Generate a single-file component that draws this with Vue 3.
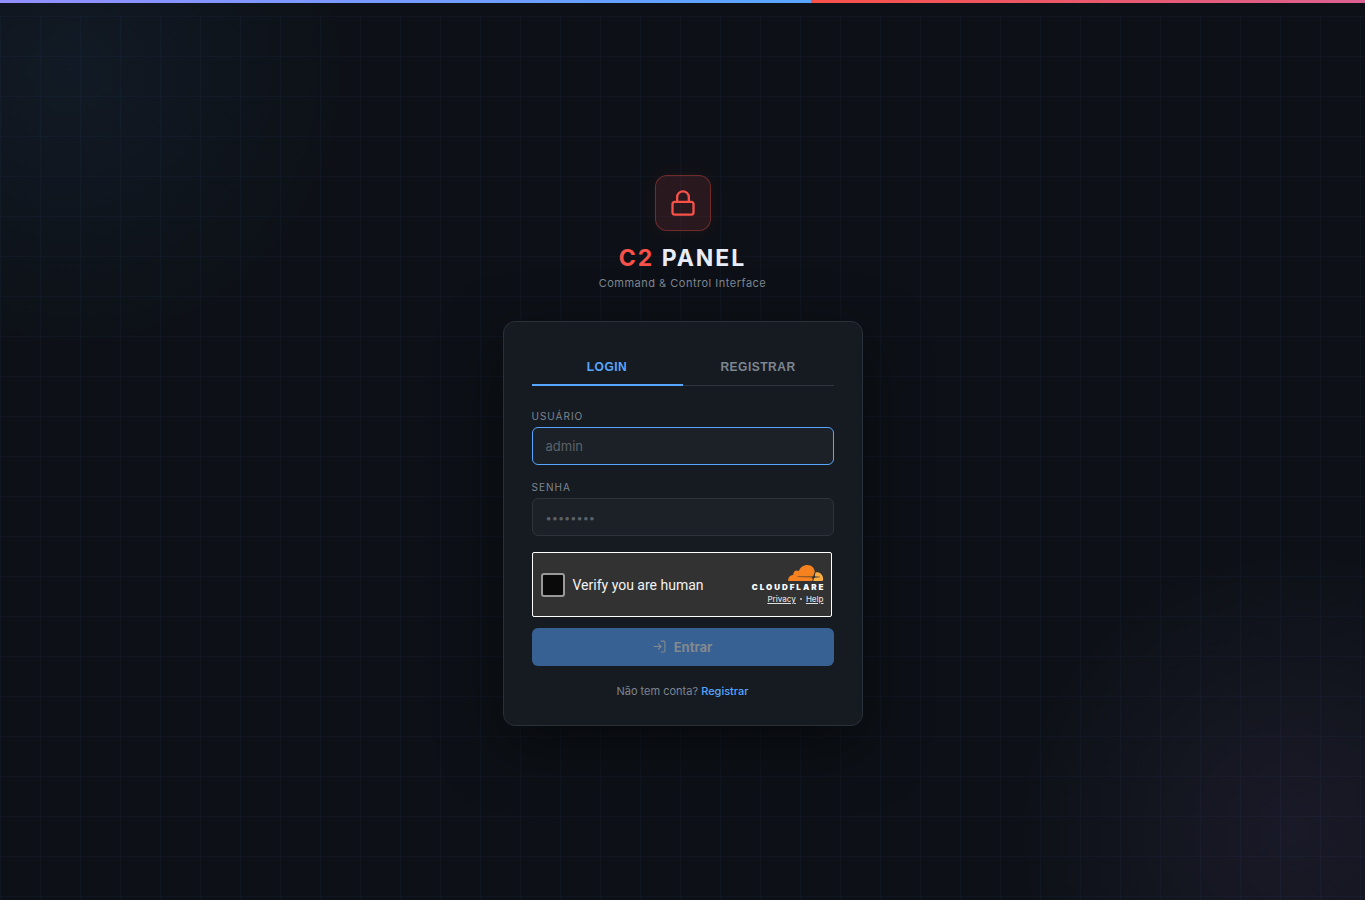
<script setup>
import { ref } from 'vue'

const tab = ref('login')
const user = ref('')
const password = ref('')
</script>

<template>
  <div class="page">
    <div class="stripe"></div>
    <div class="grid"></div>
    <main class="content">
      <header class="brand">
        <div class="badge">
          <svg width="28" height="28" viewBox="0 0 24 24" fill="none" stroke="currentColor" stroke-width="2" stroke-linecap="round" stroke-linejoin="round" aria-hidden="true">
            <rect x="3" y="11" width="18" height="11" rx="2" />
            <path d="M7 11V7a5 5 0 0 1 10 0v4" />
          </svg>
        </div>
        <h1><span>C2</span> PANEL</h1>
        <p>Command &amp; Control Interface</p>
      </header>

      <form class="card" @submit.prevent>
        <div class="tabs">
          <button type="button" :class="{ active: tab === 'login' }" @click="tab = 'login'">LOGIN</button>
          <button type="button" :class="{ active: tab === 'register' }" @click="tab = 'register'">REGISTRAR</button>
        </div>

        <div class="field">
          <label for="user">USUÁRIO</label>
          <input id="user" v-model="user" class="current" type="text" placeholder="admin" />
        </div>
        <div class="field">
          <label for="password">SENHA</label>
          <input id="password" v-model="password" type="password" placeholder="••••••••" />
        </div>

        <div class="verify">
          <label class="check"><input type="checkbox" /><span>Verify you are human</span></label>
          <div class="provider">
            <svg class="cloud" width="36" height="16" viewBox="0 0 36 16" aria-hidden="true">
              <path fill="#fbad41" d="M27.300 7.400C28.500 7.100 29.600 7.100 30.700 7.500C33.500 8.400 35.200 11 35.100 14C35.100 15.300 34.800 16 34.300 16H25.200Z" />
              <path fill="#f6821f" d="M0.200 16C-.2 12.600 2.400 10 5.400 10.100C4.800 6.600 7.800 4.400 10.800 6C12.200 2.200 15.600 0 19.400 0C24.700 0 28 4.500 26.400 10.500L25 16Z" />
              <path fill="#333" d="M9.500 11.500H23.500C24.600 11.500 25.200 11 25.700 10L26.600 7.200L27.500 7.200L26.900 10.200C26.700 11 27.200 11.500 28.400 11.500L32 11.700V12.200L27.700 12.500C26.500 12.600 25.600 13.500 25.300 14.500L24.900 16H24.300L24.600 14.500C24.800 13 24.200 12.400 22.800 12.300L9.500 12Z" />
            </svg>
            <strong>CLOUDFLARE</strong>
            <div class="links"><a href="#privacy">Privacy</a><i></i><a href="#help">Help</a></div>
          </div>
        </div>

        <button class="submit" type="submit" disabled>
          <svg width="13" height="13" viewBox="0 0 24 24" fill="none" stroke="currentColor" stroke-width="2" stroke-linecap="round" stroke-linejoin="round" aria-hidden="true">
            <path d="M15 2h5a2 2 0 0 1 2 2v16a2 2 0 0 1-2 2h-5M10 17l5-5-5-5M15 12H2" />
          </svg>
          Entrar
        </button>
        <p class="account">Não tem conta? <a href="#register">Registrar</a></p>
      </form>
    </main>
  </div>
</template>

<style>
body { margin: 0; background: #0d1117; }
</style>

<style scoped>
* { box-sizing: border-box; }
.page {
  position: relative;
  display: flex;
  min-height: 100vh;
  overflow: hidden;
  justify-content: center;
  align-items: center;
  color: #7d8590;
  background:
    radial-gradient(circle at 70px 70px, rgba(88, 166, 255, .06), transparent 280px),
    radial-gradient(circle at calc(100% - 70px) calc(100% - 70px), rgba(188, 140, 255, .07), transparent 280px),
    #0d1117;
  font-family: Inter, "Liberation Sans", sans-serif;
}
.stripe {
  position: absolute;
  inset: 0 0 auto;
  height: 3px;
  background:
    linear-gradient(90deg, #938fff, #58a6ff) left / 811px 3px no-repeat,
    linear-gradient(90deg, #f85149 811px, #db6191);
}
.grid {
  position: absolute;
  inset: 16px 0 0;
  background:
    linear-gradient(rgba(88, 166, 255, .04) 1px, transparent 1px) 0 0 / 40px 40px,
    linear-gradient(90deg, rgba(88, 166, 255, .04) 1px, transparent 1px) 0 0 / 40px 40px;
}
.content {
  position: relative;
  width: 360px;
  max-width: 100%;
}
.brand { text-align: center; margin-bottom: 30px; }
.badge {
  display: grid;
  width: 56px;
  height: 56px;
  margin: 0 auto 12px;
  place-items: center;
  color: #f85149;
  background: rgba(248, 81, 73, .12);
  border: 1px solid rgba(248, 81, 73, .35);
  border-radius: 12px;
  box-shadow: 0 0 20px rgba(248, 81, 73, .06);
}
h1 {
  margin: 0;
  color: #e8ecf8;
  font-size: 23px;
  line-height: 30px;
  font-weight: 700;
  letter-spacing: 2px;
}
h1 span { color: #f85149; }
.brand p { margin: 2px 0 0; font-size: 11px; line-height: 16px; letter-spacing: 0.5px; }
.card {
  padding: 28px 28px 26px;
  background: #161b22;
  border: 1px solid #2a3038;
  border-radius: 12px;
  box-shadow: 0 20px 60px rgba(0, 0, 0, .5);
}
.tabs { display: flex; margin-bottom: 22px; border-bottom: 1px solid #30363d; }
.tabs button {
  flex: 1;
  height: 36px;
  padding: 0;
  margin-bottom: -1px;
  color: #7d8590;
  background: none;
  border: 0;
  border-bottom: 2px solid transparent;
  font: 700 12px "Liberation Sans", Arial, sans-serif;
  letter-spacing: 0.5px;
}
.tabs .active { color: #58a6ff; border-color: #58a6ff; }
.field { margin-bottom: 14px; }
.field label { display: block; margin-bottom: 3px; font-size: 10px; line-height: 16px; letter-spacing: 1px; }
.field input {
  display: block;
  width: 100%;
  height: 38px;
  padding: 0 13px;
  color: #e6edf3;
  background: #1c2128;
  border: 1px solid #2d333b;
  border-radius: 6px;
  outline: none;
  font: 13px Inter, "Liberation Sans", sans-serif;
}
.field .current { border-color: #58a6ff; }
.field input::placeholder { color: #5b6169; opacity: 1; }
.field input[type="password"]::placeholder { font-size: 11px; }
.verify {
  display: flex;
  width: 300px;
  max-width: 100%;
  height: 65px;
  margin: 16px 0 11px;
  padding: 1px 7px 0 8px;
  align-items: center;
  justify-content: space-between;
  color: #f2f2f2;
  background: #323232;
  border: 1px solid #fff;
  border-radius: 2px;
}
.check { display: flex; align-items: center; gap: 8px; font: 14px/20px Roboto, "Liberation Sans", sans-serif; }
.check input {
  width: 24px;
  height: 24px;
  margin: 0;
  appearance: none;
  background: #0a0a0a;
  border: 2px solid #999;
  border-radius: 3px;
}
.provider { display: flex; flex-direction: column; align-items: flex-end; padding-top: 1px; }
.provider svg { display: block; }
.provider strong { font-size: 8px; line-height: 12px; font-weight: 900; letter-spacing: 2px; margin-right: -2px; color: #fff; }
.links { display: flex; align-items: center; gap: 4px; font-size: 8px; line-height: 12px; font-weight: 500; }
.links a { color: #ddd; text-decoration: underline; }
.links i { width: 2px; height: 2px; background: #ccc; border-radius: 50%; }
.submit {
  display: flex;
  width: 100%;
  height: 38px;
  align-items: center;
  justify-content: center;
  gap: 8px;
  color: #83898f;
  background: #376193;
  border: 0;
  border-radius: 6px;
  font: 700 13px Inter, "Liberation Sans", sans-serif;
}
.account { margin: 17px 0 0; text-align: center; font-size: 11px; line-height: 16px; }
.account a { color: #58a6ff; text-decoration: none; font-weight: 500; }
</style>
